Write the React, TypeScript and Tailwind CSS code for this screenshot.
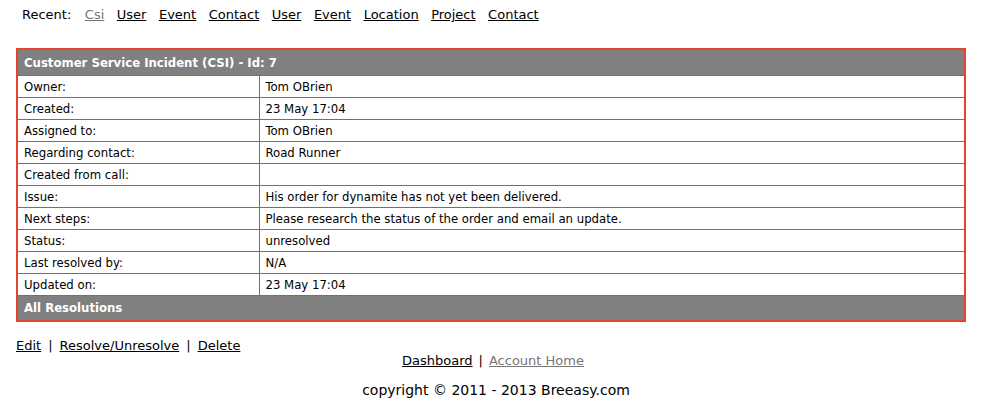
const rows: [string, string][] = [
  ["Owner:", "Tom OBrien"],
  ["Created:", "23 May 17:04"],
  ["Assigned to:", "Tom OBrien"],
  ["Regarding contact:", "Road Runner"],
  ["Created from call:", ""],
  ["Issue:", "His order for dynamite has not yet been delivered."],
  ["Next steps:", "Please research the status of the order and email an update."],
  ["Status:", "unresolved"],
  ["Last resolved by:", "N/A"],
  ["Updated on:", "23 May 17:04"],
];

const recent = ["User", "Event", "Contact", "User", "Event", "Location", "Project", "Contact"];

export default function App() {
  return (
    <div className="w-[988px] h-[400px] bg-white text-[13px] text-black font-['DejaVu_Sans',sans-serif]">
      <div className="flex gap-[12.5px] pl-[22px] pt-[5px] h-[48px]">
        <span className="mr-[1px]">Recent:</span>
        <a href="#" className="underline text-[#777]">Csi</a>
        {recent.map((r, i) => (
          <a key={i} href="#" className="underline">{r}</a>
        ))}
      </div>

      <div className="ml-[16px] w-[950px] border-2 border-[#e4432d] font-['DejaVu_Sans_Condensed','DejaVu_Sans',sans-serif]">
        <table className="w-full border-collapse">
          <tbody>
            <tr>
              <th colSpan={2} className="bg-[#808080] text-white text-left font-bold text-[13px] h-[25px] px-[6px] border-b border-[#e4432d]">
                Customer Service Incident (CSI) - Id: 7
              </th>
            </tr>
            {rows.map(([k, v]) => (
              <tr key={k} className="h-[22px]">
                <td className="w-[241px] px-[6px] border-b border-r border-[#e4432d] leading-none">{k}</td>
                <td className="px-[6px] border-b border-[#e4432d] leading-none">{v}</td>
              </tr>
            ))}
            <tr>
              <th colSpan={2} className="bg-[#808080] text-white text-left font-bold text-[13px] h-[25px] px-[6px]">
                All Resolutions
              </th>
            </tr>
          </tbody>
        </table>
      </div>

      <div className="pl-[16px] pt-[15px] flex gap-[7px] leading-[18px]">
        <a href="#" className="underline">Edit</a>
        <span>|</span>
        <a href="#" className="underline">Resolve/Unresolve</a>
        <span>|</span>
        <a href="#" className="underline">Delete</a>
      </div>
      <div className="flex justify-center gap-[6px] leading-[18px] -mt-[3px] pr-[2px]">
        <a href="#" className="underline">Dashboard</a>
        <span>|</span>
        <a href="#" className="underline text-[#777]">Account Home</a>
      </div>
      <div className="text-center pt-[11px] pl-[4px] leading-[18px] text-[14px]">copyright © 2011 - 2013 Breeasy.com</div>
    </div>
  );
}
